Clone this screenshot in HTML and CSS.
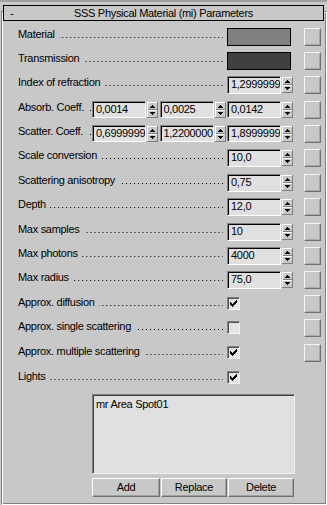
FILE: index.html
```html
<!DOCTYPE html>
<html>
<head>
<meta charset="utf-8">
<link rel="stylesheet" href="styles.css">
</head>
<body>
<svg class="defs" width="0" height="0">
  <symbol id="spin" viewBox="0 0 11 16">
    <rect x="0" y="0" width="11" height="16" fill="#c8c8c8"/>
    <rect x="0" y="0" width="11" height="1" fill="#fff"/>
    <rect x="0" y="0" width="1" height="16" fill="#fff"/>
    <rect x="0" y="15" width="11" height="1" fill="#808080"/>
    <rect x="10" y="0" width="1" height="16" fill="#808080"/>
    <rect x="1" y="7" width="9" height="1" fill="#808080"/>
    <rect x="1" y="8" width="9" height="1" fill="#fff"/>
    <rect x="5" y="3" width="1" height="1" fill="#000"/>
    <rect x="4" y="4" width="3" height="1" fill="#000"/>
    <rect x="3" y="5" width="5" height="1" fill="#000"/>
    <rect x="3" y="10" width="5" height="1" fill="#000"/>
    <rect x="4" y="11" width="3" height="1" fill="#000"/>
    <rect x="5" y="12" width="1" height="1" fill="#000"/>
  </symbol>
  <symbol id="tick" viewBox="0 0 13 13">
    <rect x="3" y="5" width="1" height="3" fill="#000"/>
    <rect x="4" y="6" width="1" height="3" fill="#000"/>
    <rect x="5" y="7" width="1" height="3" fill="#000"/>
    <rect x="6" y="6" width="1" height="3" fill="#000"/>
    <rect x="7" y="5" width="1" height="3" fill="#000"/>
    <rect x="8" y="4" width="1" height="3" fill="#000"/>
    <rect x="9" y="3" width="1" height="3" fill="#000"/>
  </symbol>
</svg>

<div class="rollout">
  <div class="title">
    <span class="minus">-</span>
    <span class="title-text">SSS Physical Material (mi) Parameters</span>
    <span></span>
  </div>

  <div class="rows">
    <div class="row">
      <div class="label"><span>Material</span><i class="leader"></i></div>
      <div class="ctl"><div class="swatch grey"></div></div>
      <div class="lock"></div>
    </div>
    <div class="row">
      <div class="label"><span>Transmission</span><i class="leader"></i></div>
      <div class="ctl"><div class="swatch dark"></div></div>
      <div class="lock"></div>
    </div>
    <div class="row tall">
      <div class="label"><span>Index of refraction</span><i class="leader"></i></div>
      <div class="ctl"><div class="field">1,2999999</div><svg class="spin"><use href="#spin"/></svg></div>
      <div class="lock"></div>
    </div>
    <div class="row">
      <div class="label"><span>Absorb. Coeff.</span><i class="leader near"></i></div>
      <div class="ctl3">
        <div class="grp"><div class="field small">0,0014</div><svg class="spin"><use href="#spin"/></svg></div>
        <div class="grp"><div class="field small">0,0025</div><svg class="spin"><use href="#spin"/></svg></div>
        <div class="grp"><div class="field small">0,0142</div><svg class="spin"><use href="#spin"/></svg></div>
      </div>
      <div class="lock"></div>
    </div>
    <div class="row">
      <div class="label"><span>Scatter. Coeff.</span><i class="leader near"></i></div>
      <div class="ctl3">
        <div class="grp"><div class="field small">0,6999999</div><svg class="spin"><use href="#spin"/></svg></div>
        <div class="grp"><div class="field small">1,2200000</div><svg class="spin"><use href="#spin"/></svg></div>
        <div class="grp"><div class="field small">1,8999999</div><svg class="spin"><use href="#spin"/></svg></div>
      </div>
      <div class="lock"></div>
    </div>
    <div class="row tall">
      <div class="label"><span>Scale conversion</span><i class="leader"></i></div>
      <div class="ctl"><div class="field">10,0</div><svg class="spin"><use href="#spin"/></svg></div>
      <div class="lock"></div>
    </div>
    <div class="row">
      <div class="label"><span>Scattering anisotropy</span><i class="leader"></i></div>
      <div class="ctl"><div class="field">0,75</div><svg class="spin"><use href="#spin"/></svg></div>
      <div class="lock"></div>
    </div>
    <div class="row tall">
      <div class="label"><span>Depth</span><i class="leader"></i></div>
      <div class="ctl"><div class="field">12,0</div><svg class="spin"><use href="#spin"/></svg></div>
      <div class="lock"></div>
    </div>
    <div class="row">
      <div class="label"><span>Max samples</span><i class="leader"></i></div>
      <div class="ctl"><div class="field">10</div><svg class="spin"><use href="#spin"/></svg></div>
      <div class="lock"></div>
    </div>
    <div class="row">
      <div class="label"><span>Max photons</span><i class="leader"></i></div>
      <div class="ctl"><div class="field">4000</div><svg class="spin"><use href="#spin"/></svg></div>
      <div class="lock"></div>
    </div>
    <div class="row">
      <div class="label"><span>Max radius</span><i class="leader"></i></div>
      <div class="ctl"><div class="field">75,0</div><svg class="spin"><use href="#spin"/></svg></div>
      <div class="lock"></div>
    </div>
    <div class="row chk">
      <div class="label"><span>Approx. diffusion</span><i class="leader"></i></div>
      <div class="ctl"><div class="check"><svg class="tick"><use href="#tick"/></svg></div></div>
      <div class="lock"></div>
    </div>
    <div class="row chk tall">
      <div class="label"><span>Approx. single scattering</span><i class="leader"></i></div>
      <div class="ctl"><div class="check"></div></div>
      <div class="lock"></div>
    </div>
    <div class="row chk tall">
      <div class="label"><span>Approx. multiple scattering</span><i class="leader"></i></div>
      <div class="ctl"><div class="check"><svg class="tick"><use href="#tick"/></svg></div></div>
      <div class="lock"></div>
    </div>
    <div class="row chk tall">
      <div class="label"><span>Lights</span><i class="leader"></i></div>
      <div class="ctl"><div class="check"><svg class="tick"><use href="#tick"/></svg></div></div>
      <div class="lock empty"></div>
    </div>
  </div>

  <div class="lights">
    <div class="listbox"><div class="item">mr Area Spot01</div></div>
    <div class="btns">
      <button class="btn">Add</button>
      <button class="btn">Replace</button>
      <button class="btn">Delete</button>
    </div>
  </div>
</div>
</body>
</html>
```

FILE: styles.css
```css
* { box-sizing: border-box; }

html, body { margin: 0; padding: 0; }

body {
  width: 327px;
  height: 505px;
  overflow: hidden;
  background: #c8c8c8;
  border-top: 2px solid #a0a0a0;
  font-family: "Liberation Sans", Arial, sans-serif;
  font-size: 11px;
  letter-spacing: -0.3px;
  color: #000;
}

.defs { display: none; }

.rollout {
  margin: 9px 0 0 1px;
  border: 1px solid;
  border-color: #808080 #fff #fff #808080;
  box-shadow: inset 1px 1px #fff, inset -1px -1px #808080;
  padding-bottom: 7px;
}

.title {
  margin: -7px 2px 0 1px;
  height: 16px;
  border: 1px solid #000;
  background: #c8c8c8;
  display: grid;
  grid-template-columns: 1fr auto 1fr;
  align-items: center;
  line-height: 13px;
}

.minus { padding-left: 6px; }

.rows { margin-top: 7px; }

.row {
  display: flex;
  align-items: flex-start;
  height: 24px;
  padding: 0 5px 0 16px;
}
.row.tall { height: 25px; }

.label {
  flex: 1;
  min-width: 0;
  display: flex;
  align-items: flex-end;
  line-height: 13px;
  white-space: nowrap;
}
.row.chk .label { padding-top: 1px; }

.leader {
  flex: 1;
  height: 1px;
  margin: 0 4px 3px 4px;
  background: linear-gradient(to right, transparent 3px, #000 3px) right bottom / 4px 1px repeat-x;
}
.leader.near { margin-right: 1px; }

.ctl {
  width: 66px;
  height: 18px;
  display: flex;
  align-items: center;
}

.ctl3 {
  width: 201px;
  height: 17px;
  display: flex;
  justify-content: space-between;
}

.grp {
  display: flex;
  align-items: center;
}

.swatch {
  width: 64px;
  height: 18px;
  border: 1px solid #000;
}
.swatch.grey { background: #808080; }
.swatch.dark { background: #404040; }

.field {
  width: 54px;
  height: 18px;
  background: #e0e0e0;
  border: 1px solid;
  border-color: #808080 #fff #fff #808080;
  box-shadow: inset 1px 1px #000;
  padding: 0 0 0 3px;
  line-height: 15px;
  overflow: hidden;
  white-space: nowrap;
}
.field.small { height: 17px; }

.spin {
  width: 11px;
  height: 16px;
  margin-left: 1px;
  flex: none;
}

.check {
  margin-top: 2px;
  width: 13px;
  height: 13px;
  background: #e4e4e4;
  border: 1px solid;
  border-color: #808080 #fff #fff #808080;
  border-style: solid dotted dotted solid;
  box-shadow: inset 1px 1px #505050;
  align-self: flex-start;
}
.tick {
  display: block;
  width: 13px;
  height: 13px;
  margin: -1px 0 0 -1px;
}

.lock {
  margin-left: 11px;
  width: 17px;
  height: 18px;
  border: 1px solid;
  border-color: #f4f4f4 #707070 #707070 #f4f4f4;
  box-shadow: inset -1px -1px #a8a8a8;
  flex: none;
}
.lock.empty { visibility: hidden; }

.lights { padding-left: 90px; }

.listbox {
  width: 203px;
  height: 80px;
  background: #e0e0e0;
  border: 1px solid;
  border-color: #808080 #fff #fff #808080;
  border-style: solid dotted dotted solid;
  box-shadow: inset 1px 1px #404040;
  padding: 3px 0 0 3px;
  line-height: 13px;
}

.btns {
  margin-top: 4px;
  display: grid;
  grid-template-columns: 68px 66px 66px;
  column-gap: 1px;
}

.btn {
  height: 19px;
  padding: 0;
  font: inherit;
  letter-spacing: inherit;
  color: #000;
  line-height: 13px;
  background: #c8c8c8;
  border: 1px solid;
  border-color: #fff #707070 #707070 #fff;
  box-shadow: inset -1px -1px #a0a0a0;
}
```
